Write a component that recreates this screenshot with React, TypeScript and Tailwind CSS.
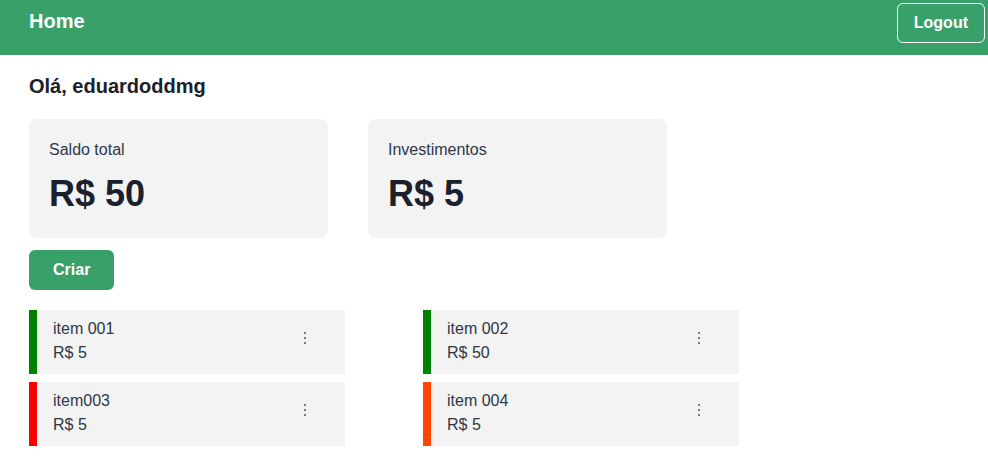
import React from "react";

const items = [
  { name: "item 001", value: "R$ 5", color: "bg-[#008000]" },
  { name: "item 002", value: "R$ 50", color: "bg-[#008000]" },
  { name: "item003", value: "R$ 5", color: "bg-[#ff0000]" },
  { name: "item 004", value: "R$ 5", color: "bg-[#ff4500]" },
];

function Kebab() {
  return (
    <svg width="4" height="14" viewBox="0 0 4 14" className="text-[#4a5568]">
      <circle cx="2" cy="2" r="1" fill="currentColor" />
      <circle cx="2" cy="7" r="1" fill="currentColor" />
      <circle cx="2" cy="12" r="1" fill="currentColor" />
    </svg>
  );
}

export default function App() {
  return (
    <div className="min-h-[463px] bg-white font-['Liberation_Sans',Arial,sans-serif] text-[#1a202c]">
      <header className="h-[55px] bg-[#38a169] flex items-start justify-between pl-[29px] pr-[3px] pt-[3px]">
        <div className="h-9 leading-9 text-xl font-bold text-white">Home</div>
        <button className="h-10 px-4 rounded-md border border-white text-white font-bold text-base">
          Logout
        </button>
      </header>
      <main className="px-[29px]">
        <h1 className="mt-[16px] text-xl font-bold leading-[30px]">Olá, eduardoddmg</h1>
        <div className="mt-[18px] flex gap-10">
          <div className="w-[299px] h-[119px] rounded-lg bg-[#f3f3f4] px-5 pt-[21px]">
            <div className="text-base leading-5 text-[#2d3748]">Saldo total</div>
            <div className="mt-[14px] text-4xl leading-10 font-bold">R$ 50</div>
          </div>
          <div className="w-[299px] h-[119px] rounded-lg bg-[#f3f3f4] px-5 pt-[21px]">
            <div className="text-base leading-5 text-[#2d3748]">Investimentos</div>
            <div className="mt-[14px] text-4xl leading-10 font-bold">R$ 5</div>
          </div>
        </div>
        <button className="mt-3 h-10 px-6 rounded-md bg-[#38a169] text-white font-bold text-base">
          Criar
        </button>
        <div className="mt-5 grid grid-cols-[316px_316px] gap-x-[78px] gap-y-2">
          {items.map((it) => (
            <div key={it.name} className="flex h-16 bg-[#f3f3f4]">
              <div className={`w-2 ${it.color}`} />
              <div className="flex-1 flex items-start justify-between pl-4 pr-[38px] pt-[7px] text-[#2d3748]">
                <div className="text-base leading-6">
                  <div>{it.name}</div>
                  <div>{it.value}</div>
                </div>
                <div className="pt-[14px]">
                  <Kebab />
                </div>
              </div>
            </div>
          ))}
        </div>
      </main>
    </div>
  );
}
